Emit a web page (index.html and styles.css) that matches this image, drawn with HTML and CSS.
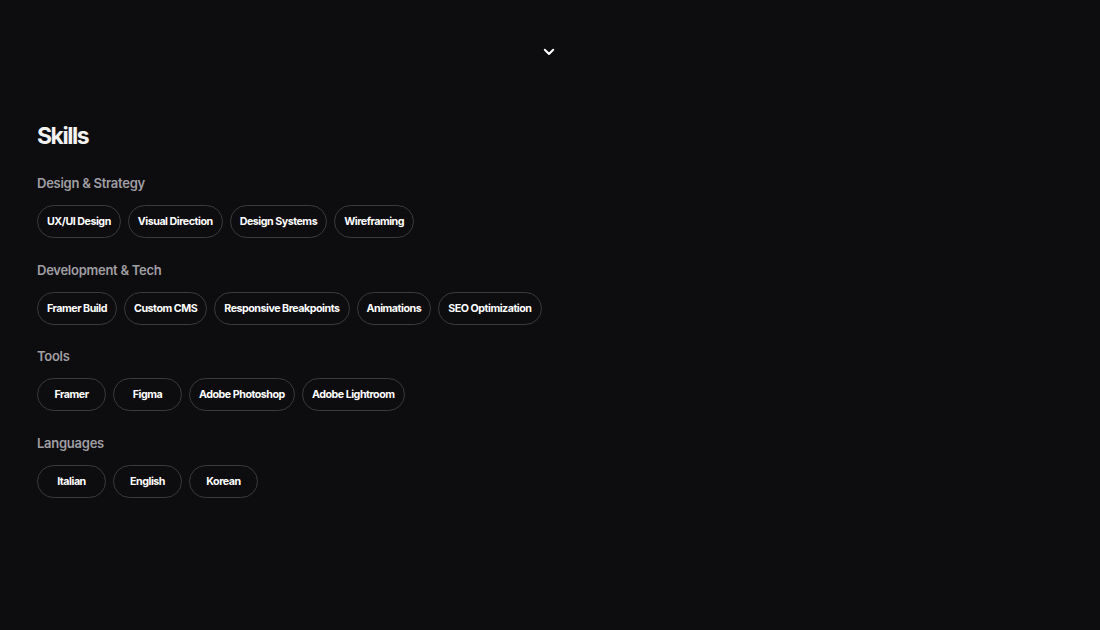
FILE: index.html
```html
<!DOCTYPE html>
<html lang="en">
<head>
<meta charset="utf-8">
<title>Skills</title>
<link rel="stylesheet" href="styles.css">
</head>
<body>
<div class="top">
  <svg class="chev" width="12" height="8" viewBox="0 0 12 8"><path d="M1.8 1.8 L6 6 L10.2 1.8" fill="none" stroke="#ffffff" stroke-width="2" stroke-linecap="round" stroke-linejoin="round"/></svg>
</div>
<main class="skills">
  <h1 class="title">Skills</h1>
  <section class="group">
    <h2 class="label">Design &amp; Strategy</h2>
    <div class="pills">
      <span class="pill">UX/UI Design</span>
      <span class="pill">Visual Direction</span>
      <span class="pill">Design Systems</span>
      <span class="pill">Wireframing</span>
    </div>
  </section>
  <section class="group">
    <h2 class="label">Development &amp; Tech</h2>
    <div class="pills">
      <span class="pill">Framer Build</span>
      <span class="pill">Custom CMS</span>
      <span class="pill">Responsive Breakpoints</span>
      <span class="pill">Animations</span>
      <span class="pill">SEO Optimization</span>
    </div>
  </section>
  <section class="group">
    <h2 class="label">Tools</h2>
    <div class="pills">
      <span class="pill">Framer</span>
      <span class="pill">Figma</span>
      <span class="pill">Adobe Photoshop</span>
      <span class="pill">Adobe Lightroom</span>
    </div>
  </section>
  <section class="group">
    <h2 class="label">Languages</h2>
    <div class="pills">
      <span class="pill">Italian</span>
      <span class="pill">English</span>
      <span class="pill">Korean</span>
    </div>
  </section>
</main>
</body>
</html>
```
FILE: styles.css
```css
html, body {
  margin: 0;
  padding: 0;
  background: #0d0c0f;
  color: #ffffff;
  font-family: Inter, "Liberation Sans", sans-serif;
  height: 100%;
}
.top {
  display: flex;
  justify-content: center;
  padding-top: 48px;
  height: 8px;
}
.chev {
  display: block;
  margin-left: -3px;
}
.skills {
  padding: 65px 37px 0;
  display: flex;
  flex-direction: column;
}
.title {
  margin: 0 0 24px;
  font-size: 23px;
  line-height: 30px;
  font-weight: 700;
  letter-spacing: -0.065em;
  color: #f2f2f2;
}
.group {
  display: flex;
  flex-direction: column;
  gap: 13px;
  margin-bottom: 23.5px;
}
.label {
  margin: 0;
  font-size: 13px;
  line-height: 17px;
  font-weight: 600;
  letter-spacing: -0.02em;
  color: #a09fa3;
}
.pills {
  display: flex;
  flex-wrap: wrap;
  gap: 7px;
}
.pill {
  box-sizing: border-box;
  height: 33px;
  min-width: 69px;
  padding: 0 9px;
  display: inline-flex;
  align-items: center;
  justify-content: center;
  border: 1px solid #3b3a3e;
  border-radius: 999px;
  font-size: 10.7px;
  font-weight: 700;
  letter-spacing: -0.045em;
  color: #ffffff;
}
```
